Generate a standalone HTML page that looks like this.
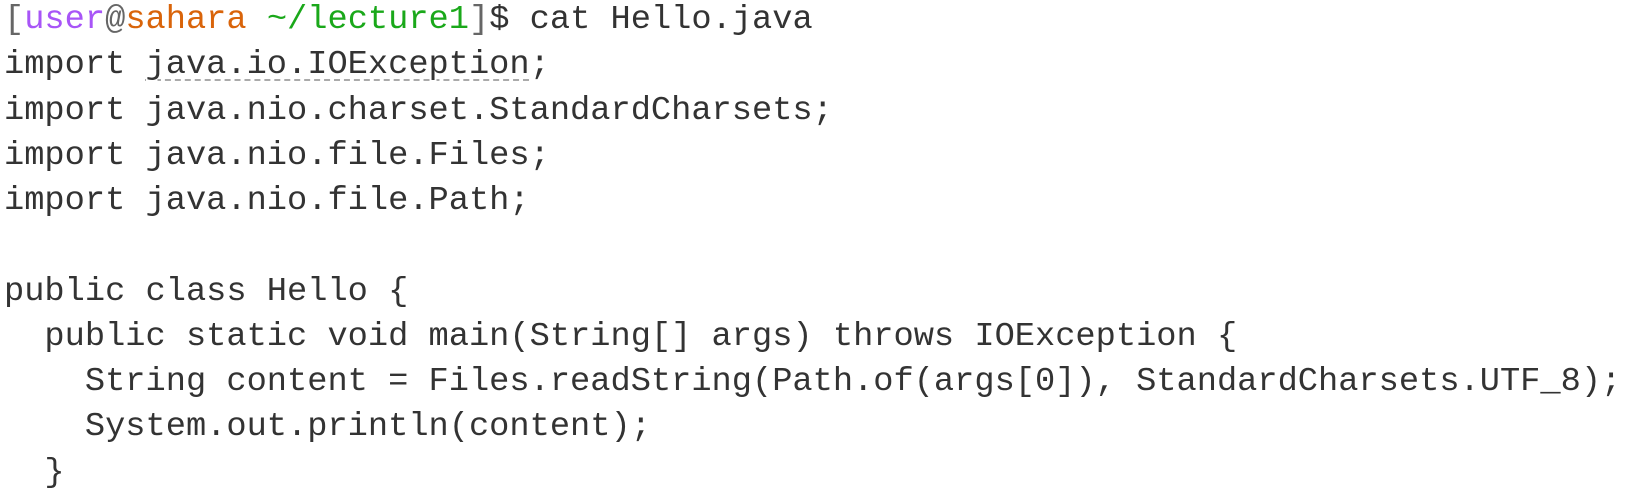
<!DOCTYPE html>
<html><head><style>
html,body{margin:0;padding:0;background:#fff;width:1630px;height:494px;overflow:hidden}
pre{margin:0;padding:0;position:absolute;left:4px;top:-2px;font-family:"Liberation Mono",monospace;font-size:33.7px;line-height:45.25px;color:#333;white-space:pre}
.p{color:#a855f7}.o{color:#d9640a}.g{color:#1aa81a}.b{color:#666}
.u{text-decoration:underline dashed #aaa;text-decoration-thickness:2px;text-underline-offset:6px}
</style></head><body>
<pre><span class="b">[</span><span class="p">user</span><span class="b">@</span><span class="o">sahara</span> <span class="g">~/lecture1</span><span class="b">]</span>$ cat Hello.java
import <span class="u">java.io.IOException</span>;
import java.nio.charset.StandardCharsets;
import java.nio.file.Files;
import java.nio.file.Path;

public class Hello {
  public static void main(String[] args) throws IOException {
    String content = Files.readString(Path.of(args[0]), StandardCharsets.UTF_8);
    System.out.println(content);
  }
</pre>
</body></html>
